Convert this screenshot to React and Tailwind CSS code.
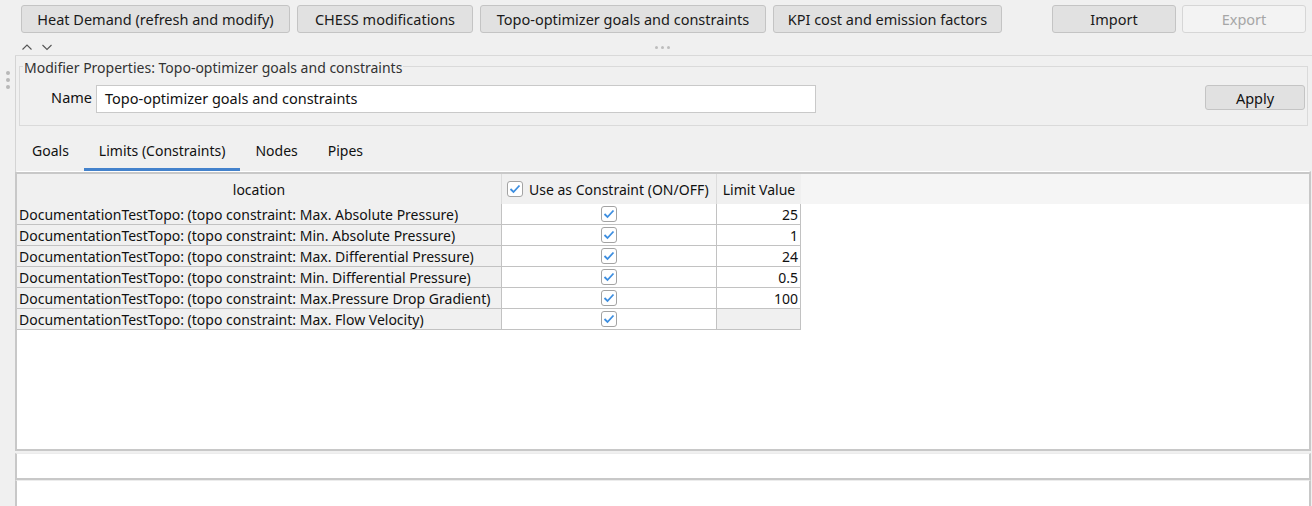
import React from 'react';

const rows = [
  { label: 'DocumentationTestTopo: (topo constraint: Max. Absolute Pressure)', value: '25' },
  { label: 'DocumentationTestTopo: (topo constraint: Min. Absolute Pressure)', value: '1' },
  { label: 'DocumentationTestTopo: (topo constraint: Max. Differential Pressure)', value: '24' },
  { label: 'DocumentationTestTopo: (topo constraint: Min. Differential Pressure)', value: '0.5' },
  { label: 'DocumentationTestTopo: (topo constraint: Max.Pressure Drop Gradient)', value: '100' },
  { label: 'DocumentationTestTopo: (topo constraint: Max. Flow Velocity)', value: null },
];

const Check = () => (
  <svg width="16" height="16" viewBox="0 0 16 16">
    <rect x="0.5" y="0.5" width="15" height="15" rx="2.5" fill="#fff" stroke="#a3a3a3" />
    <polyline points="3.5,8 6.5,11 12.5,4.5" fill="none" stroke="#3d8ee0" strokeWidth="1.8" />
  </svg>
);

const TopButton = ({ children, w, disabled }) => (
  <button
    className={
      disabled
        ? `${w} h-[28px] pt-[2px] rounded-[3px] border border-[#d6d6d6] bg-[#f3f3f3] text-[#a6a6a6] text-[14.5px]`
        : `${w} h-[28px] pt-[2px] rounded-[3px] border border-[#c4c4c4] bg-[#e1e1e1] text-[#1a1a1a] text-[14.5px]`
    }
  >
    {children}
  </button>
);

export default function App() {
  return (
    <div className="w-[1312px] h-[506px] bg-[#f0f0f0] overflow-hidden flex flex-col font-['Noto_Sans',sans-serif] text-[#111]">
      {/* toolbar */}
      <div className="flex pt-[5px] pl-[21px] h-[33px] shrink-0">
        <div className="flex gap-[7px]">
          <TopButton w="w-[269px]">Heat Demand (refresh and modify)</TopButton>
          <TopButton w="w-[176px]">CHESS modifications</TopButton>
          <TopButton w="w-[286px]">Topo-optimizer goals and constraints</TopButton>
          <TopButton w="w-[229px]">KPI cost and emission factors</TopButton>
        </div>
        <div className="flex gap-[6px] ml-[50px]">
          <TopButton w="w-[124px]">Import</TopButton>
          <TopButton w="w-[124px]" disabled>Export</TopButton>
        </div>
      </div>

      {/* splitter row */}
      <div className="flex items-center h-[22px] shrink-0 pl-[22px] pt-[6px]">
        <svg width="32" height="8" viewBox="0 0 32 8">
          <polyline points="0.5,6.5 5,2 9.5,6.5" fill="none" stroke="#555" strokeWidth="1.1" />
          <polyline points="20.5,2 25,6.5 29.5,2" fill="none" stroke="#555" strokeWidth="1.1" />
        </svg>
        <div className="flex gap-[3px] ml-[601px]">
          <span className="w-[3px] h-[3px] rounded-full bg-[#bdbdbd]" />
          <span className="w-[3px] h-[3px] rounded-full bg-[#bdbdbd]" />
          <span className="w-[3px] h-[3px] rounded-full bg-[#bdbdbd]" />
        </div>
      </div>

      <div className="flex flex-1 min-h-0">
        {/* left grip */}
        <div className="w-[15px] shrink-0 flex flex-col items-center pt-[16px] gap-[3px]">
          <span className="w-[4px] h-[4px] rounded-full bg-[#b8b8b8]" />
          <span className="w-[4px] h-[4px] rounded-full bg-[#b8b8b8]" />
          <span className="w-[4px] h-[4px] rounded-full bg-[#b8b8b8]" />
        </div>

        <div className="flex-1 flex flex-col border-t border-[#d9d9d9] min-w-0">
          <div className="border-l border-[#d4d4d4] h-[115px] shrink-0 flex flex-col">
            {/* group box */}
            <div className="mt-[10px] ml-[3px] mr-[4px] h-[60px] border border-[#dadada] relative">
              <span className="absolute left-[3px] top-[-7px] bg-[#f0f0f0] px-[1px] text-[14px] leading-[16px] text-[#333]">
                Modifier Properties: Topo-optimizer goals and constraints
              </span>
              <div className="flex items-start pt-[18px]">
                <span className="w-[72px] text-right text-[14.5px] leading-[20px] mt-[2px]">Name</span>
                <div className="ml-[4px] w-[720px] h-[28px] bg-white border border-[#c9c9c9] flex items-center pl-[8px] text-[14.5px]">
                  Topo-optimizer goals and constraints
                </div>
                <div className="flex-1" />
                <button className="w-[100px] h-[25px] mr-[2px] rounded-[3px] border border-[#c4c4c4] bg-[#e1e1e1] text-[14.5px] leading-[20px]">
                  Apply
                </button>
              </div>
            </div>
            {/* tabs */}
            <div className="flex items-end h-[45px] pl-[1px]">
              <div className="flex text-[14px] h-[32px]">
                <div className="px-[15px] flex items-start pt-[1px]">Goals</div>
                <div className="px-[15px] flex items-start pt-[1px] border-b-[3px] border-[#4382cc]">Limits (Constraints)</div>
                <div className="px-[15px] flex items-start pt-[1px]">Nodes</div>
                <div className="px-[15px] flex items-start pt-[1px]">Pipes</div>
              </div>
            </div>
          </div>

          {/* table */}
          <div className="h-[280px] shrink-0 bg-white border-t border-l-2 border-r-2 border-b-2 border-[#c8c8c8] border-t-[#ffffff] mr-[1px] flex flex-col">
            <div className="h-[2px] bg-[#c8c8c8]" />
            <div className="flex h-[30px] bg-[#f2f2f2] text-[14px]">
              <div className="w-[485px] shrink-0 flex items-center justify-center bg-[#f0f0f0] border-r border-[#dcdcdc]">location</div>
              <div className="w-[215px] shrink-0 flex items-center pl-[5px] gap-[6px] bg-[#f0f0f0] border-r border-[#dcdcdc]">
                <Check />
                <span>Use as Constraint (ON/OFF)</span>
              </div>
              <div className="w-[84px] shrink-0 flex items-center justify-center bg-[#f0f0f0]">Limit Value</div>
              <div className="flex-1 bg-[#f5f5f5]" />
            </div>
            {rows.map((r) => (
              <div key={r.label} className="flex h-[21px] text-[14px]">
                <div className="w-[485px] shrink-0 bg-[#f0f0f0] border-r border-b border-[#c2c2c2] pl-[2px] flex items-center whitespace-nowrap overflow-hidden">
                  {r.label}
                </div>
                <div className="w-[215px] shrink-0 border-r border-b border-[#c2c2c2] flex items-center justify-center">
                  <Check />
                </div>
                <div
                  className={
                    r.value === null
                      ? 'w-[84px] shrink-0 border-r border-b border-[#c2c2c2] bg-[#f0f0f0]'
                      : 'w-[84px] shrink-0 border-r border-b border-[#c2c2c2] flex items-center justify-end pr-[2px]'
                  }
                >
                  {r.value}
                </div>
              </div>
            ))}
          </div>

          <div className="h-[2px] shrink-0" />
          <div className="h-[27px] shrink-0 bg-white border-l-2 border-r-2 border-b-2 border-[#c8c8c8] border-t border-t-[#ececec] mr-[1px]" />
          <div className="flex-1 bg-white border-l-2 border-r-2 border-[#c8c8c8] border-t border-t-[#ececec] mr-[1px]" />
        </div>
      </div>
    </div>
  );
}
